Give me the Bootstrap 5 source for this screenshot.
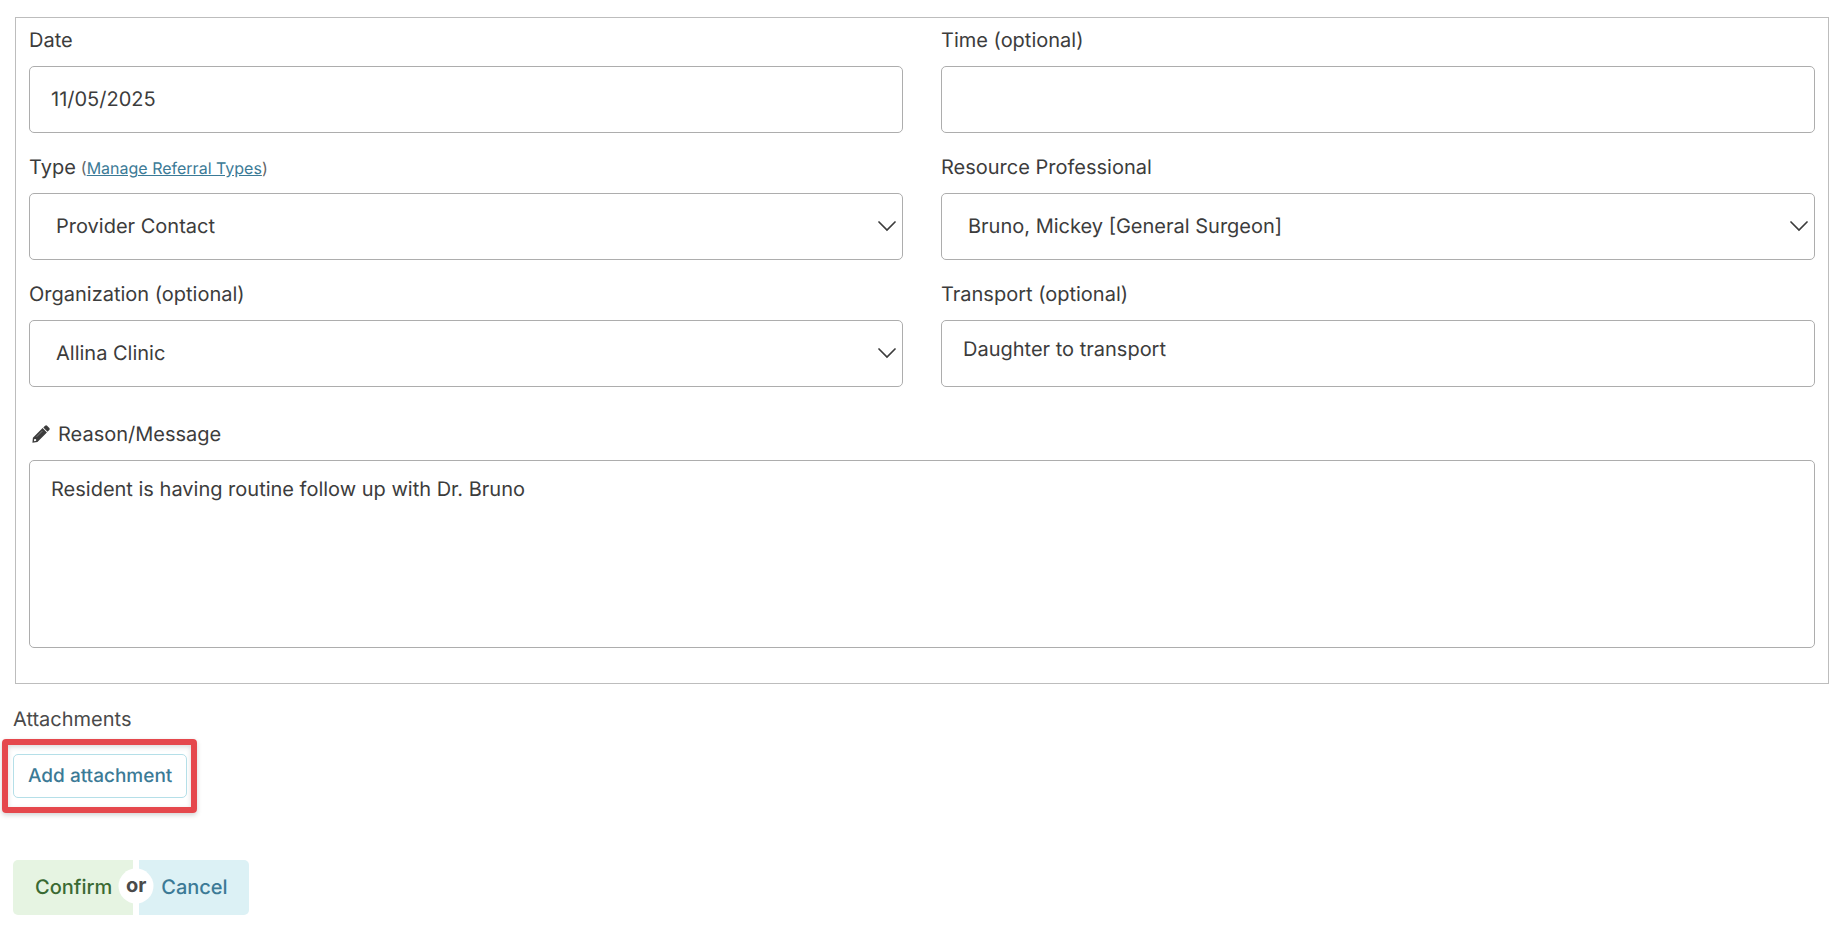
<!DOCTYPE html>
<html lang="en">
<head>
<meta charset="utf-8">
<meta name="viewport" content="width=device-width, initial-scale=1">
<title>Referral</title>
<link href="https://cdn.jsdelivr.net/npm/bootstrap@5.3.0/dist/css/bootstrap.min.css" rel="stylesheet">
<style>
  body { font-family: Inter, "Liberation Sans", sans-serif; font-size: 20px; line-height: 30px; color: #3c3c3c; background: #fff; text-rendering: geometricPrecision; }
  .page { padding: 17px 17px 11px 13px; }
  .panel { margin-left: 2px; padding: 7px 13px 35px; border: 1px solid #bdbdbd; }
  .fields { --bs-gutter-x: 38px; --bs-gutter-y: 19px; }
  .form-label { margin-bottom: 11px; line-height: 30px; }
  .type-note { margin-left: 5px; font-size: 16px; line-height: 20px; color: #666; }
  a { color: #3b7a96; }
  .form-control, .form-select { height: 67px; font-size: 20px; line-height: 30px; color: #3c3c3c; border: 1px solid #adadad; border-radius: 5px; background-color: #fff; }
  .form-control { padding: 13px 21px 15px; resize: none; text-rendering: inherit; }
  .form-select {
    padding: 0 40px 1px 22px; text-indent: 4px; text-rendering: inherit;
    background-image: url("data:image/svg+xml,%3Csvg xmlns='http://www.w3.org/2000/svg' viewBox='0 0 18 11'%3E%3Cpath d='M1 1l8 8 8-8' fill='none' stroke='%233c3c3c' stroke-width='1.7' stroke-linecap='round'/%3E%3C/svg%3E");
    background-size: 18px 11px; background-position: right 6px center;
  }
  .reason { margin-top: 32px; }
  textarea.message { height: 188px; }
  .pencil { width: 18px; height: 18px; margin: 0 8px 0 3px; }
  .attachments { margin-top: 20px; color: #4a4a4a; }
  /* Highlight drawn around the attachment button */
  .callout { margin: 5px 0 0 -11px; padding: 9px 4px 9px 5px; border: 6px solid #e5484d; border-radius: 4px; box-shadow: 0 2px 5px rgba(0,0,0,.18), inset 0 2px 5px rgba(0,0,0,.15); }
  .btn { text-rendering: inherit; }
  .btn-attach { height: 44px; padding: 0 14px; font-size: 19px; font-weight: 500; line-height: 28px; color: #3b7a96; background: #fff; border: 1px solid #b5dfe8; border-radius: 5px; }
  .actions { margin-top: 47px; }
  .actions .btn { height: 55px; font-size: 20px; font-weight: 500; border: 0; padding: 0 21px 2px 22px; }
  .actions .btn-confirm { color: #3a6a33; background: #e6f4e2; border-radius: 5px 0 0 5px; }
  .actions .btn-cancel { color: #3b7a96; background: #dcf1f5; border-radius: 0 5px 5px 0; }
  .or-slot { width: 6px; height: 51px; }
  .or-dot { width: 35px; height: 35px; font-weight: 700; line-height: 32px; color: #4a4a4a; background: #fff; }
</style>
</head>
<body>
<main class="page">
  <form>
    <section class="panel">
      <div class="row fields">
        <div class="col-6">
          <label class="form-label d-block" for="date">Date</label>
          <input class="form-control" id="date" type="text" value="11/05/2025">
        </div>
        <div class="col-6">
          <label class="form-label d-block" for="time">Time (optional)</label>
          <input class="form-control" id="time" type="text">
        </div>
        <div class="col-6">
          <div class="d-flex align-items-baseline">
            <label class="form-label" for="type">Type</label>
            <span class="type-note">(<a href="#">Manage Referral Types</a>)</span>
          </div>
          <select class="form-select" id="type"><option>Provider Contact</option></select>
        </div>
        <div class="col-6">
          <label class="form-label d-block" for="professional">Resource Professional</label>
          <select class="form-select" id="professional"><option>Bruno, Mickey [General Surgeon]</option></select>
        </div>
        <div class="col-6">
          <label class="form-label d-block" for="organization">Organization (optional)</label>
          <select class="form-select" id="organization"><option>Allina Clinic</option></select>
        </div>
        <div class="col-6">
          <label class="form-label d-block" for="transport">Transport (optional)</label>
          <textarea class="form-control" id="transport" rows="1">Daughter to transport</textarea>
        </div>
      </div>
      <div class="reason">
        <label class="form-label d-flex align-items-center" for="message">
          <svg class="pencil" viewBox="0 0 18 18" aria-hidden="true">
            <path fill="#3c3c3c" fill-rule="evenodd" d="M10.6 3.1L14.9 7.4 5.4 17 0.4 17.8 0.9 12.7ZM2.3 13.9L1.9 16.2 4.2 15.8 4.1 14.5 3.5 13.9Z"/>
            <path fill="#3c3c3c" d="M11.3 2.5L13.1.7Q14.1-.2 15.1.7L17.3 2.9Q18.1 3.9 17.3 4.9L15.5 6.7Z"/>
            <path fill="none" stroke="#aaa" stroke-width=".6" d="M4.6 11.8L10.5 5.9"/>
          </svg>
          <span>Reason/Message</span>
        </label>
        <textarea class="form-control message" id="message">Resident is having routine follow up with Dr. Bruno</textarea>
      </div>
    </section>

    <section class="attachments">
      <div>Attachments</div>
      <div class="callout d-inline-flex"><button class="btn btn-attach" type="button">Add attachment</button></div>
    </section>

    <div class="actions d-flex">
      <button class="btn btn-confirm" type="submit">Confirm</button>
      <div class="or-slot position-relative">
        <span class="or-dot position-absolute top-50 start-50 translate-middle rounded-circle text-center">or</span>
      </div>
      <button class="btn btn-cancel" type="button">Cancel</button>
    </div>
  </form>
</main>
<script src="https://cdn.jsdelivr.net/npm/bootstrap@5.3.0/dist/js/bootstrap.bundle.min.js"></script>
</body>
</html>
